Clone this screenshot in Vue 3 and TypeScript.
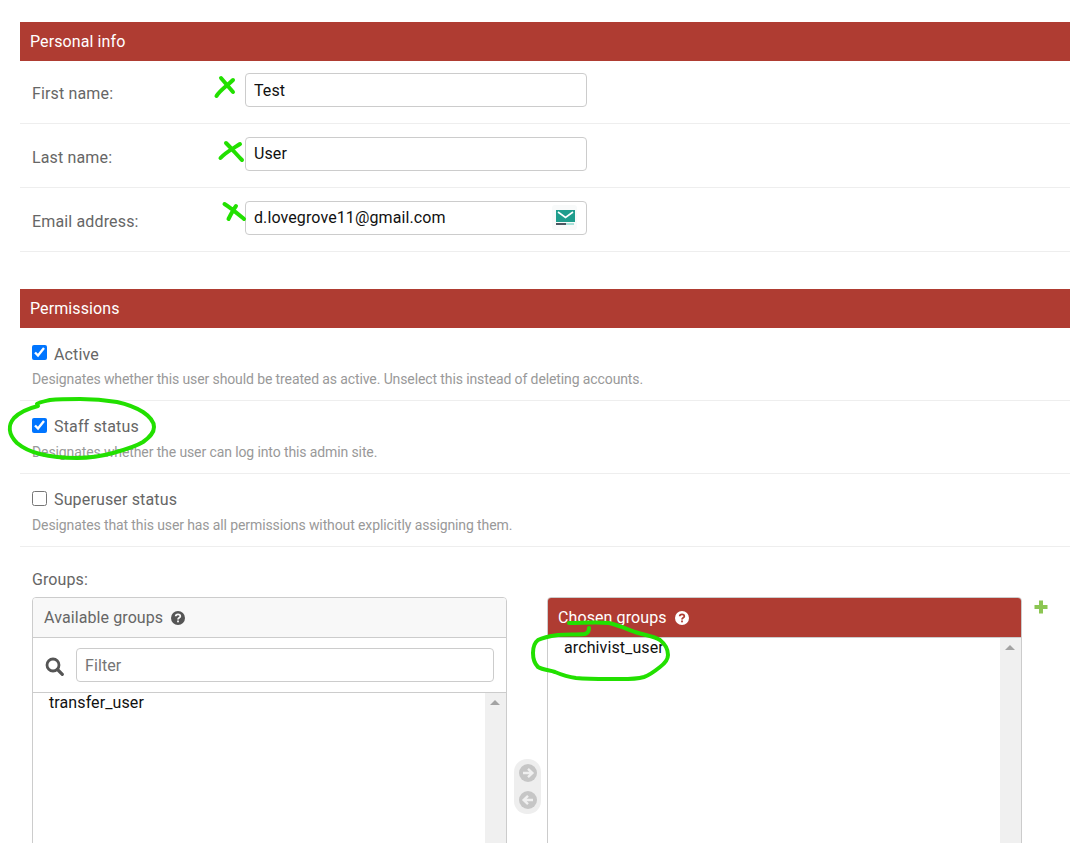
<script setup lang="ts">
const fields = [
  { label: 'First name:', value: 'Test', mail: false },
  { label: 'Last name:', value: 'User', mail: false },
  { label: 'Email address:', value: 'd.lovegrove11@gmail.com', mail: true },
]
const perms = [
  { label: 'Active', on: true, help: 'Designates whether this user should be treated as active. Unselect this instead of deleting accounts.' },
  { label: 'Staff status', on: true, help: 'Designates whether the user can log into this admin site.' },
  { label: 'Superuser status', on: false, help: 'Designates that this user has all permissions without explicitly assigning them.' },
]
const marks = [
  'M216.5 96 C220 90 228 85 233 80 M221 78 L233 92',
  'M220.5 158 C226 152 234 148 240 144 M226 143 C232 149 237 155 242 160',
  'M224.5 204 C231 208 238 214 244 219 M236 206 C233 210 231 214 228.5 219',
  'M38 406 C30 408 20 412 14 418 C8 425 8 434 17 443 C24 449 32 452 40 454 C52 457 65 458 77 458 C90 458 102 456 113 453 C124 450 135 447 143 442 C150 437 154 433 154 427 C154 421 149 416 143 412 C135 407 126 404 117 402 C105 400 92 399 80 399 C70 399 60 399 50 400 C46 401 40 402 37 404',
  'M569 623 C582 623 596 622 609 623 C618 625 627 629 635 632 C644 635 654 636 660 640 C665 644 668 650 668 655 C668 660 664 664 660 667 C655 671 650 675 644 677 C633 680 621 679 609 679 C598 679 587 679 576 678 C568 677 562 675 555 672 C549 670 543 670 538 667 C534 663 533 658 533 653 C533 648 534 643 538 640 C544 637 551 636 558 635 C567 634 576 635 585 634 C588 633 589 631 589 628',
]
</script>

<template>
  <div class="page">
    <section class="section">
      <h2 class="bar">Personal info</h2>
      <div v-for="f in fields" :key="f.label" class="field">
        <label class="field-label">{{ f.label }}</label>
        <div class="input-wrap">
          <input class="text-input" type="text" :value="f.value" />
          <span v-if="f.mail" class="mail">
            <svg width="25" height="25" viewBox="0 0 25 25">
              <rect x="0" y="0" width="25" height="25" rx="3" fill="#f8fafa" />
              <rect x="4" y="5" width="19" height="12" fill="#1f9d8d" />
              <path d="M6 7 L13.5 12.5 L21 7" fill="none" stroke="#fff" stroke-width="1.6" />
              <rect x="4" y="18" width="10" height="2" fill="#4a5560" />
              <rect x="14" y="18" width="8" height="2" fill="#a8e0d8" />
            </svg>
          </span>
        </div>
      </div>
    </section>

    <section class="section perms">
      <h2 class="bar">Permissions</h2>
      <div v-for="p in perms" :key="p.label" class="perm">
        <div class="perm-line">
          <input class="check" type="checkbox" :checked="p.on" />
          <span class="perm-label">{{ p.label }}</span>
        </div>
        <p class="help">{{ p.help }}</p>
      </div>

      <div class="groups">
        <div class="groups-label">Groups:</div>
        <div class="selector">
          <div class="box">
            <div class="box-head">
              Available groups
              <svg class="q" width="14" height="14" viewBox="0 0 14 14">
                <circle cx="7" cy="7" r="7" fill="#555" />
                <path d="M4.7 5.3 C4.8 2.7 9.3 2.7 9.3 5.2 C9.3 6.9 7 6.8 7 8.5" fill="none" stroke="#f8f8f8" stroke-width="1.8" />
                <rect x="6.1" y="9.5" width="1.8" height="1.8" fill="#f8f8f8" />
              </svg>
            </div>
            <div class="filter">
              <svg class="search" width="19" height="19" viewBox="0 0 19 19">
                <circle cx="8" cy="8" r="6" fill="none" stroke="#555" stroke-width="2.8" />
                <path d="M12.5 12.5 L17.3 17.3" stroke="#555" stroke-width="3.2" stroke-linecap="round" />
              </svg>
              <input class="text-input filter-input" type="text" placeholder="Filter" />
            </div>
            <div class="list with-border">
              <div class="opt">transfer_user</div>
              <div class="scroll"><span class="tri"></span></div>
            </div>
          </div>

          <div class="movers">
            <svg width="18" height="18" viewBox="0 0 18 18">
              <circle cx="9" cy="9" r="9" fill="#c6c6c6" />
              <path d="M4 9 H13 M9 4.8 L13.4 9 L9 13.2" fill="none" stroke="#f0f0f0" stroke-width="2.4" />
            </svg>
            <svg width="18" height="18" viewBox="0 0 18 18">
              <circle cx="9" cy="9" r="9" fill="#c6c6c6" />
              <path d="M14 9 H5 M9 4.8 L4.6 9 L9 13.2" fill="none" stroke="#f0f0f0" stroke-width="2.4" />
            </svg>
          </div>

          <div class="box">
            <div class="box-head chosen">
              Chosen groups
              <svg class="q" width="14" height="14" viewBox="0 0 14 14">
                <circle cx="7" cy="7" r="7" fill="#fff" />
                <path d="M4.7 5.3 C4.8 2.7 9.3 2.7 9.3 5.2 C9.3 6.9 7 6.8 7 8.5" fill="none" stroke="#af3c32" stroke-width="1.8" />
                <rect x="6.1" y="9.5" width="1.8" height="1.8" fill="#af3c32" />
              </svg>
            </div>
            <div class="list">
              <div class="opt">archivist_user</div>
              <div class="scroll"><span class="tri"></span></div>
            </div>
          </div>

          <svg class="plus" width="14" height="14" viewBox="0 0 14 14">
            <path d="M7 0.5 V13.5 M0.5 7 H13.5" stroke="#8cc653" stroke-width="4" />
          </svg>
        </div>
      </div>
    </section>

    <svg class="ink" width="1092" height="843" viewBox="0 0 1092 843">
      <path v-for="(d, i) in marks" :key="i" :d="d" fill="none" stroke="#22e000" stroke-width="4" stroke-linecap="round" stroke-linejoin="round" />
    </svg>
  </div>
</template>

<style>
html, body { margin: 0; height: 843px; overflow: hidden; background: #fff; }
</style>

<style scoped>
.page {
  position: relative;
  box-sizing: border-box;
  height: 843px;
  overflow: hidden;
  padding: 22px 22px 0 20px;
  font-family: Roboto, "Liberation Sans", sans-serif;
  font-size: 16px;
  letter-spacing: 0.1px;
  color: #666;
}
.ink { position: absolute; left: 0; top: 0; pointer-events: none; }
.bar {
  margin: 0;
  height: 39px;
  padding-left: 10px;
  line-height: 39px;
  font-size: 16px;
  font-weight: 400;
  color: #fff;
  background: #af3c32;
}
.field {
  display: flex;
  padding: 13px 0 16px 12px;
  border-bottom: 1px solid #eee;
}
.field:nth-child(2) { padding-top: 12px; }
.field-label { width: 213px; padding-top: 9px; line-height: 24px; letter-spacing: 0.15px; }
.input-wrap { position: relative; width: 342px; }
.text-input {
  display: block;
  box-sizing: border-box;
  width: 100%;
  height: 34px;
  padding: 0 8px;
  border: 1px solid #ccc;
  border-radius: 4px;
  outline: none;
  background: #fff;
  color: #111;
  font: 16px Roboto, "Liberation Sans", sans-serif;
  letter-spacing: 0.1px;
}
.field:not(:nth-child(2)) .text-input { padding-bottom: 2px; }
.text-input::placeholder { color: #757575; }
.mail { position: absolute; right: 10px; top: 4px; width: 25px; height: 25px; }
.mail svg { display: block; }
.perms { margin-top: 37px; }
.perm {
  padding: 14px 0 0 12px;
  height: 58px;
  border-bottom: 1px solid #eee;
}
.perm-line { display: flex; align-items: center; height: 24px; }
.check {
  width: 15px;
  height: 15px;
  margin: -4px 7px 0 0;
  accent-color: #0075ff;
}
.perm-label { line-height: 24px; letter-spacing: 0.15px; }
.perm:nth-child(2) .perm-label { padding-top: 2px; }
.help {
  margin: 3px 0 0;
  line-height: 21px;
  font-size: 14px;
  letter-spacing: -0.11px;
  color: #999;
}
.groups { padding: 21px 0 0 12px; }
.groups-label { line-height: 24px; margin-bottom: 5px; }
.selector { display: flex; align-items: flex-start; }
.box {
  box-sizing: border-box;
  width: 475px;
  height: 400px;
  border: 1px solid #ccc;
  border-radius: 4px 4px 0 0;
  overflow: hidden;
}
.box-head {
  display: flex;
  align-items: center;
  gap: 8px;
  height: 39px;
  padding-left: 11px;
  border-bottom: 1px solid #ccc;
  background: #f8f8f8;
}
.box-head.chosen { padding-left: 10px; background: #af3c32; color: #fff; }
.filter {
  display: flex;
  align-items: center;
  height: 54px;
  padding: 0 12px;
  gap: 12px;
}
.search { flex: none; margin-top: 2px; }
.filter-input { flex: 1; width: auto; }
.list { display: flex; height: 320px; color: #111; }
.list.with-border { border-top: 1px solid #ccc; }
.opt { flex: 1; padding-left: 16px; line-height: 19px; }
.scroll { width: 21px; background: #f0f0f0; position: relative; }
.tri {
  position: absolute;
  left: 5px;
  top: 7px;
  border-left: 5px solid transparent;
  border-right: 5px solid transparent;
  border-bottom: 5px solid #a3a3a3;
}
.movers {
  flex: none;
  display: flex;
  flex-direction: column;
  align-items: center;
  gap: 9px;
  box-sizing: border-box;
  width: 27px;
  height: 55px;
  margin: 162px 6px 0 7px;
  padding-top: 5px;
  border-radius: 13px;
  background: #eee;
}
.plus { flex: none; margin: 3px 0 0 12px; }
</style>
